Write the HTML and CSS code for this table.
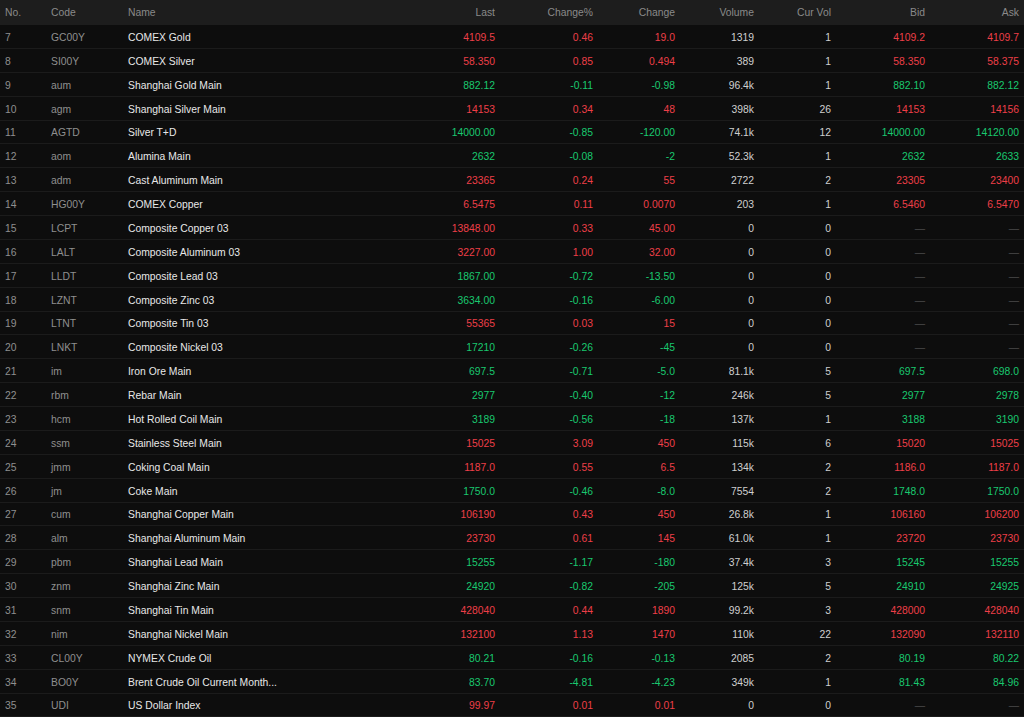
FILE: index.html
```html
<!DOCTYPE html>
<html>
<head>
<meta charset="utf-8">
<title>Quotes</title>
<link rel="stylesheet" href="styles.css">
</head>
<body>
<table class="quotes">
<colgroup>
<col class="c-no"><col class="c-code"><col class="c-name"><col class="c-last"><col class="c-pct"><col class="c-chg"><col class="c-vol"><col class="c-cur"><col class="c-bid"><col class="c-ask">
</colgroup>
<thead>
<tr><th class="l">No.</th><th class="l">Code</th><th class="l">Name</th><th>Last</th><th>Change%</th><th>Change</th><th>Volume</th><th>Cur Vol</th><th>Bid</th><th>Ask</th></tr>
</thead>
<tbody>
<tr class="up"><td class="no">7</td><td class="code">GC00Y</td><td class="name">COMEX Gold</td><td>4109.5</td><td>0.46</td><td>19.0</td><td class="vol">1319</td><td class="vol">1</td><td>4109.2</td><td>4109.7</td></tr>
<tr class="up"><td class="no">8</td><td class="code">SI00Y</td><td class="name">COMEX Silver</td><td>58.350</td><td>0.85</td><td>0.494</td><td class="vol">389</td><td class="vol">1</td><td>58.350</td><td>58.375</td></tr>
<tr class="down"><td class="no">9</td><td class="code">aum</td><td class="name">Shanghai Gold Main</td><td>882.12</td><td>-0.11</td><td>-0.98</td><td class="vol">96.4k</td><td class="vol">1</td><td>882.10</td><td>882.12</td></tr>
<tr class="up"><td class="no">10</td><td class="code">agm</td><td class="name">Shanghai Silver Main</td><td>14153</td><td>0.34</td><td>48</td><td class="vol">398k</td><td class="vol">26</td><td>14153</td><td>14156</td></tr>
<tr class="down"><td class="no">11</td><td class="code">AGTD</td><td class="name">Silver T+D</td><td>14000.00</td><td>-0.85</td><td>-120.00</td><td class="vol">74.1k</td><td class="vol">12</td><td>14000.00</td><td>14120.00</td></tr>
<tr class="down"><td class="no">12</td><td class="code">aom</td><td class="name">Alumina Main</td><td>2632</td><td>-0.08</td><td>-2</td><td class="vol">52.3k</td><td class="vol">1</td><td>2632</td><td>2633</td></tr>
<tr class="up"><td class="no">13</td><td class="code">adm</td><td class="name">Cast Aluminum Main</td><td>23365</td><td>0.24</td><td>55</td><td class="vol">2722</td><td class="vol">2</td><td>23305</td><td>23400</td></tr>
<tr class="up"><td class="no">14</td><td class="code">HG00Y</td><td class="name">COMEX Copper</td><td>6.5475</td><td>0.11</td><td>0.0070</td><td class="vol">203</td><td class="vol">1</td><td>6.5460</td><td>6.5470</td></tr>
<tr class="up"><td class="no">15</td><td class="code">LCPT</td><td class="name">Composite Copper 03</td><td>13848.00</td><td>0.33</td><td>45.00</td><td class="vol">0</td><td class="vol">0</td><td class="na">—</td><td class="na">—</td></tr>
<tr class="up"><td class="no">16</td><td class="code">LALT</td><td class="name">Composite Aluminum 03</td><td>3227.00</td><td>1.00</td><td>32.00</td><td class="vol">0</td><td class="vol">0</td><td class="na">—</td><td class="na">—</td></tr>
<tr class="down"><td class="no">17</td><td class="code">LLDT</td><td class="name">Composite Lead 03</td><td>1867.00</td><td>-0.72</td><td>-13.50</td><td class="vol">0</td><td class="vol">0</td><td class="na">—</td><td class="na">—</td></tr>
<tr class="down"><td class="no">18</td><td class="code">LZNT</td><td class="name">Composite Zinc 03</td><td>3634.00</td><td>-0.16</td><td>-6.00</td><td class="vol">0</td><td class="vol">0</td><td class="na">—</td><td class="na">—</td></tr>
<tr class="up"><td class="no">19</td><td class="code">LTNT</td><td class="name">Composite Tin 03</td><td>55365</td><td>0.03</td><td>15</td><td class="vol">0</td><td class="vol">0</td><td class="na">—</td><td class="na">—</td></tr>
<tr class="down"><td class="no">20</td><td class="code">LNKT</td><td class="name">Composite Nickel 03</td><td>17210</td><td>-0.26</td><td>-45</td><td class="vol">0</td><td class="vol">0</td><td class="na">—</td><td class="na">—</td></tr>
<tr class="down"><td class="no">21</td><td class="code">im</td><td class="name">Iron Ore Main</td><td>697.5</td><td>-0.71</td><td>-5.0</td><td class="vol">81.1k</td><td class="vol">5</td><td>697.5</td><td>698.0</td></tr>
<tr class="down"><td class="no">22</td><td class="code">rbm</td><td class="name">Rebar Main</td><td>2977</td><td>-0.40</td><td>-12</td><td class="vol">246k</td><td class="vol">5</td><td>2977</td><td>2978</td></tr>
<tr class="down"><td class="no">23</td><td class="code">hcm</td><td class="name">Hot Rolled Coil Main</td><td>3189</td><td>-0.56</td><td>-18</td><td class="vol">137k</td><td class="vol">1</td><td>3188</td><td>3190</td></tr>
<tr class="up"><td class="no">24</td><td class="code">ssm</td><td class="name">Stainless Steel Main</td><td>15025</td><td>3.09</td><td>450</td><td class="vol">115k</td><td class="vol">6</td><td>15020</td><td>15025</td></tr>
<tr class="up"><td class="no">25</td><td class="code">jmm</td><td class="name">Coking Coal Main</td><td>1187.0</td><td>0.55</td><td>6.5</td><td class="vol">134k</td><td class="vol">2</td><td>1186.0</td><td>1187.0</td></tr>
<tr class="down"><td class="no">26</td><td class="code">jm</td><td class="name">Coke Main</td><td>1750.0</td><td>-0.46</td><td>-8.0</td><td class="vol">7554</td><td class="vol">2</td><td>1748.0</td><td>1750.0</td></tr>
<tr class="up"><td class="no">27</td><td class="code">cum</td><td class="name">Shanghai Copper Main</td><td>106190</td><td>0.43</td><td>450</td><td class="vol">26.8k</td><td class="vol">1</td><td>106160</td><td>106200</td></tr>
<tr class="up"><td class="no">28</td><td class="code">alm</td><td class="name">Shanghai Aluminum Main</td><td>23730</td><td>0.61</td><td>145</td><td class="vol">61.0k</td><td class="vol">1</td><td>23720</td><td>23730</td></tr>
<tr class="down"><td class="no">29</td><td class="code">pbm</td><td class="name">Shanghai Lead Main</td><td>15255</td><td>-1.17</td><td>-180</td><td class="vol">37.4k</td><td class="vol">3</td><td>15245</td><td>15255</td></tr>
<tr class="down"><td class="no">30</td><td class="code">znm</td><td class="name">Shanghai Zinc Main</td><td>24920</td><td>-0.82</td><td>-205</td><td class="vol">125k</td><td class="vol">5</td><td>24910</td><td>24925</td></tr>
<tr class="up"><td class="no">31</td><td class="code">snm</td><td class="name">Shanghai Tin Main</td><td>428040</td><td>0.44</td><td>1890</td><td class="vol">99.2k</td><td class="vol">3</td><td>428000</td><td>428040</td></tr>
<tr class="up"><td class="no">32</td><td class="code">nim</td><td class="name">Shanghai Nickel Main</td><td>132100</td><td>1.13</td><td>1470</td><td class="vol">110k</td><td class="vol">22</td><td>132090</td><td>132110</td></tr>
<tr class="down"><td class="no">33</td><td class="code">CL00Y</td><td class="name">NYMEX Crude Oil</td><td>80.21</td><td>-0.16</td><td>-0.13</td><td class="vol">2085</td><td class="vol">2</td><td>80.19</td><td>80.22</td></tr>
<tr class="down"><td class="no">34</td><td class="code">BO0Y</td><td class="name">Brent Crude Oil Current Month...</td><td>83.70</td><td>-4.81</td><td>-4.23</td><td class="vol">349k</td><td class="vol">1</td><td>81.43</td><td>84.96</td></tr>
<tr class="up"><td class="no">35</td><td class="code">UDI</td><td class="name">US Dollar Index</td><td>99.97</td><td>0.01</td><td>0.01</td><td class="vol">0</td><td class="vol">0</td><td class="na">—</td><td class="na">—</td></tr>
</tbody>
</table>
</body>
</html>
```

FILE: styles.css
```css
html, body {
  margin: 0;
  padding: 0;
  background: #ffffff;
}

.quotes {
  width: 1024px;
  table-layout: fixed;
  border-collapse: separate;
  border-spacing: 0;
  font-family: "Liberation Sans", Arial, sans-serif;
  font-size: 10.35px;
  background: #0d0d0d;
}

.c-no { width: 46px; }
.c-code { width: 77px; }
.c-name { width: 277px; }
.c-last { width: 100px; }
.c-pct { width: 98px; }
.c-chg { width: 82px; }
.c-vol { width: 79px; }
.c-cur { width: 77px; }
.c-bid { width: 94px; }
.c-ask { width: 94px; }

.quotes th {
  height: 25px;
  padding: 0 5px;
  box-sizing: border-box;
  background: #1d1d1d;
  color: #8a8a8a;
  font-weight: normal;
  text-align: right;
  white-space: nowrap;
}

.quotes th.l {
  text-align: left;
}

.quotes td {
  height: 23.88px;
  padding: 2px 5px 0;
  box-sizing: border-box;
  border-bottom: 1px solid #1b1b1b;
  text-align: right;
  white-space: nowrap;
  overflow: hidden;
}

.quotes td.no,
.quotes td.code {
  text-align: left;
  color: #8f8f8f;
}

.quotes td.name {
  text-align: left;
  color: #e8e8e8;
}

.up td { color: #ee3f48; }
.down td { color: #19c86f; }

.quotes td.vol { color: #cfcfcf; }
.quotes td.na { color: #4a4a4a; }
```
